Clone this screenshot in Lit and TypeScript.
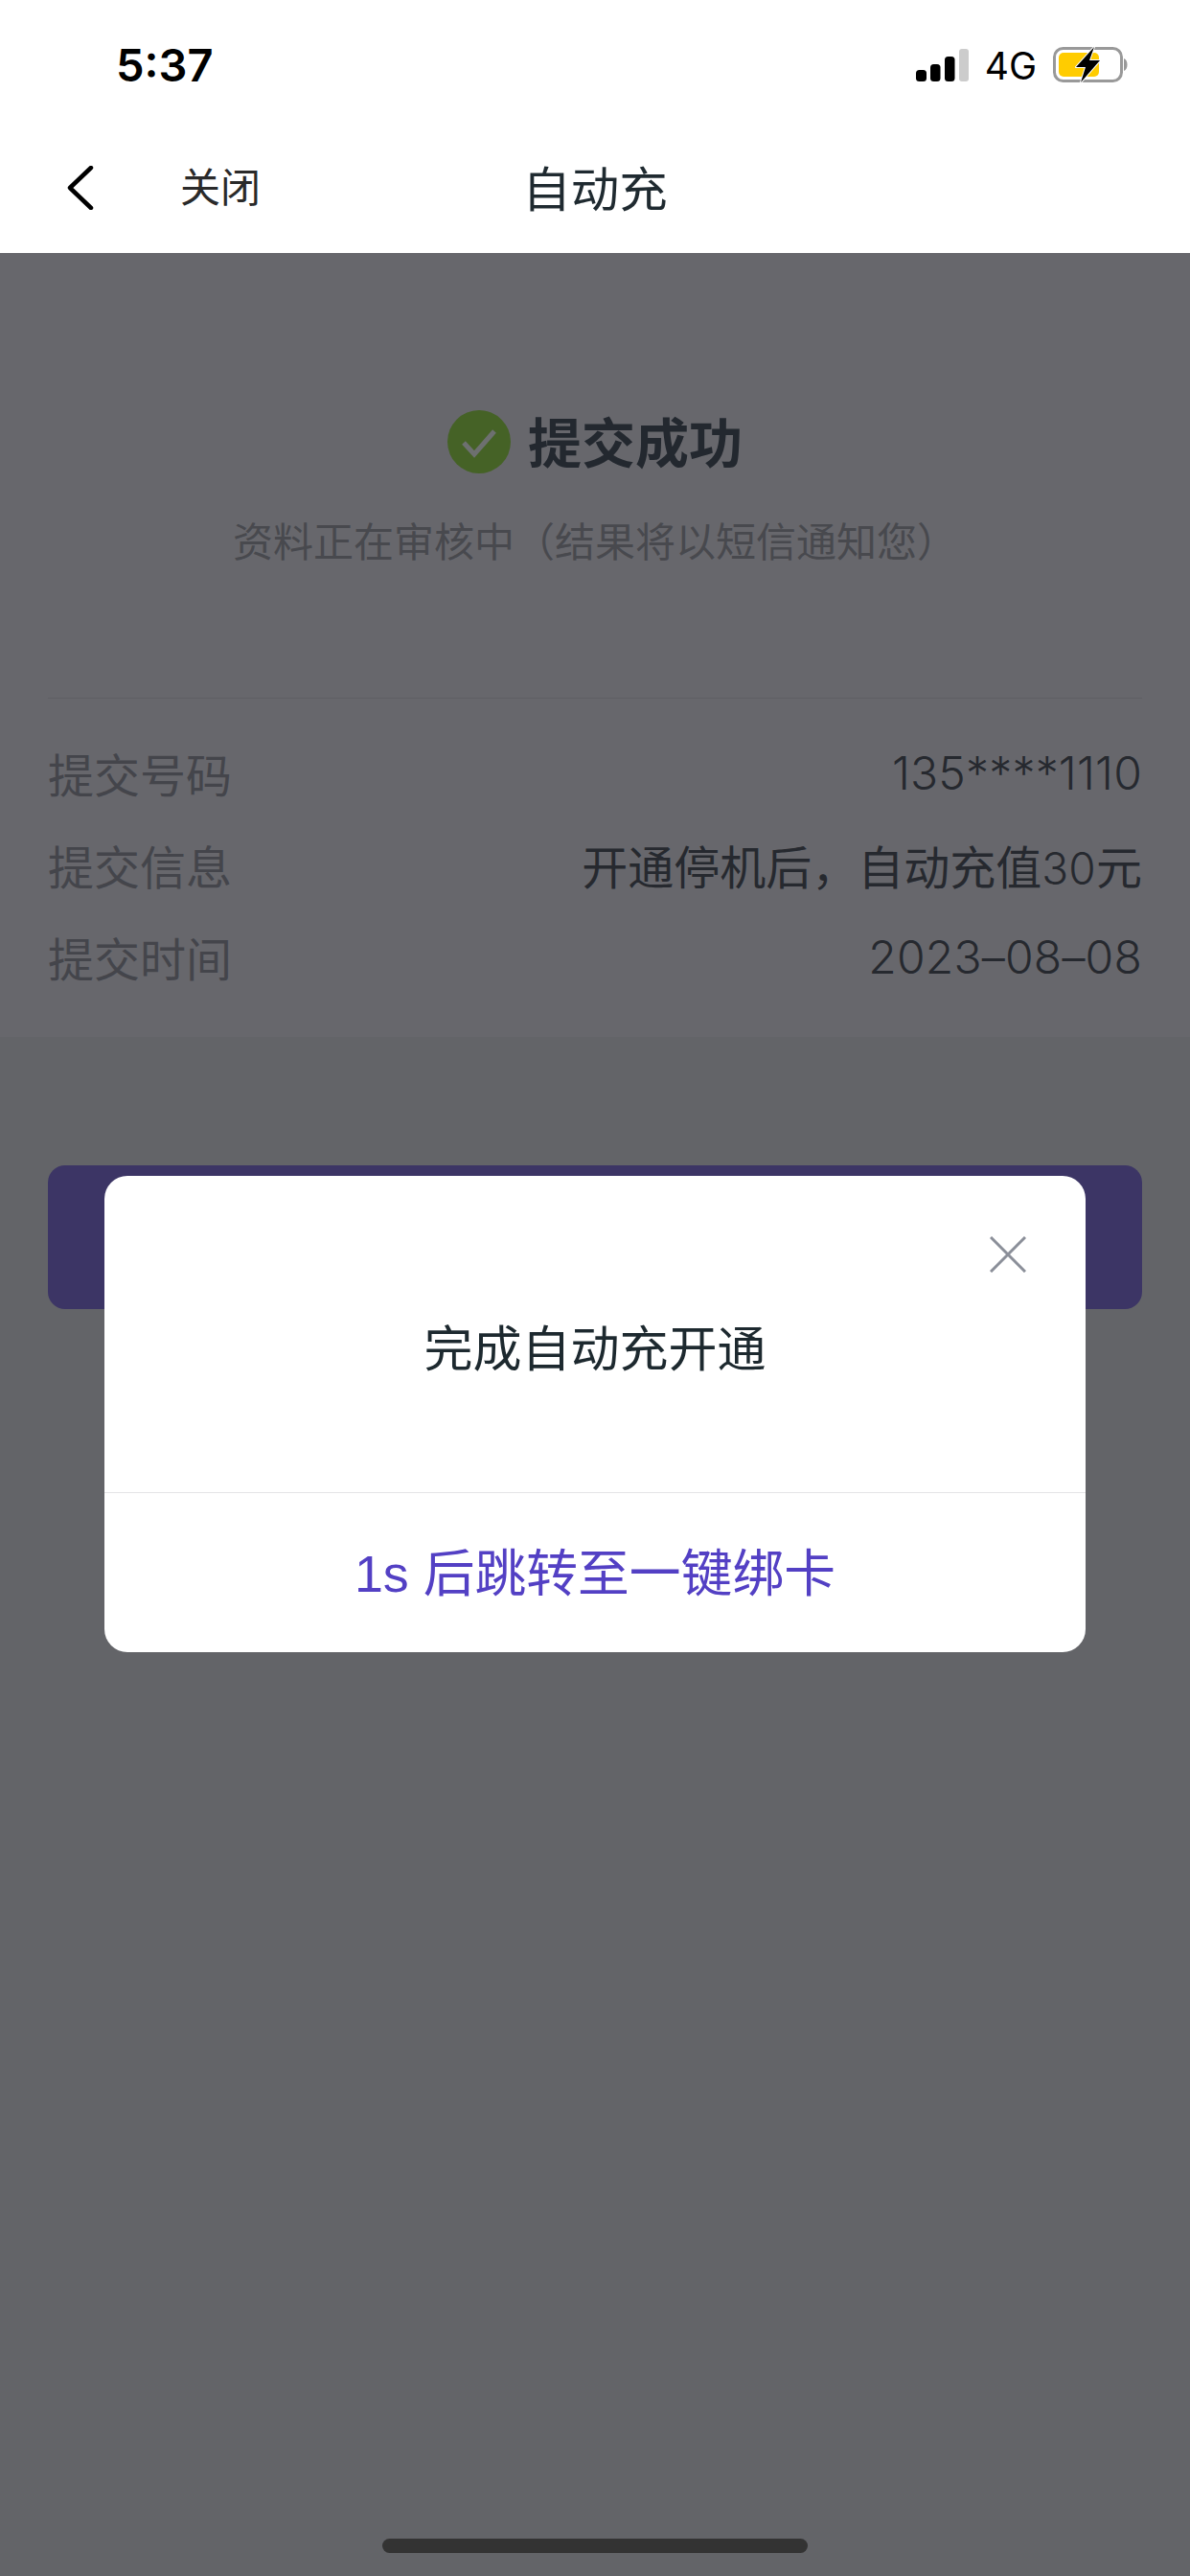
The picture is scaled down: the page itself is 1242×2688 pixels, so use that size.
import { LitElement, html, css } from "lit";
import { customElement } from "lit/decorators.js";

@customElement("app-root")
export class AppRoot extends LitElement {
  static styles = css`
    :host {
      display: block;
      position: relative;
      width: 1242px;
      height: 2688px;
      overflow: hidden;
      background: #636468;
      font-family: "Liberation Sans", "Noto Sans CJK SC", sans-serif;
    }
    .top { background: #fff; height: 264px; display: flex; flex-direction: column; }
    .status { height: 134px; display: flex; align-items: center; justify-content: space-between; padding: 0 65px 0 121px; box-sizing: border-box; }
    .time { font: 600 47px Inter, sans-serif; color: #000; margin-top: 1px; }
    .indicators { display: flex; align-items: center; margin-top: 2px; }
    .net { font: 400 39px Inter, sans-serif; color: #000; margin: 0 17px 0 17px; }
    .nav { height: 130px; display: grid; grid-template-columns: 1fr auto 1fr; align-items: center; }
    .left { display: flex; align-items: center; padding-left: 68px; }
    .back { margin-right: 88px; margin-bottom: 6px; }
    .close { font-size: 42px; color: #2a2a2a; margin-bottom: 14px; }
    .title { font-size: 50.500px; color: #1f2a30; margin-bottom: 10px; }
    .card { height: 818px; background: #67676c; box-sizing: border-box; padding: 164px 50px 0; }
    .hero { display: flex; justify-content: center; align-items: center; gap: 18px; height: 66px; }
    .hero-text { font-size: 56px; font-weight: 700; color: #23282f; margin-bottom: 6px; }
    .sub { text-align: center; font-size: 42px; color: #48494e; margin-top: 43px; line-height: 60px; }
    .rule { height: 1px; background: #5f5f64; margin-top: 131px; }
    .rows { margin-top: 41px; display: flex; flex-direction: column; gap: 24px; }
    .row { display: flex; justify-content: space-between; align-items: center; height: 72px; font-size: 48px; }
    .label { color: #44454b; }
    .value { color: #26292f; }
    .num { font-family: Inter, sans-serif; font-weight: 350; font-size: 48px; letter-spacing: 0.2px; }
    .tight { font-size: 46px; }
    .cta { height: 150px; margin: 134px 50px 0; border-radius: 18px; background: #3c3565; }
    .home { position: absolute; left: 399px; top: 2649px; width: 444px; height: 15px; border-radius: 8px; background: #333; }
    .modal { position: absolute; left: 109px; top: 1227px; width: 1024px; height: 497px; background: #fff; border-radius: 24px; display: flex; flex-direction: column; }
    .x { position: absolute; right: 62px; top: 63px; }
    .msg { height: 331px; padding-top: 146px; box-sizing: border-box; text-align: center; font-size: 51px; line-height: 72px; color: #1d292f; border-bottom: 1px solid #e4e4e6; }
    .link { flex: 1; display: flex; align-items: center; justify-content: center; font-size: 53.800px; color: #5340c4; padding-bottom: 8px; white-space: pre; }
  `;

  render() {
    return html`
      <div class="top">
        <div class="status">
          <span class="time">5:37</span>
          <div class="indicators">
            <svg width="55" height="34" viewBox="0 0 55 34">
              <rect x="0" y="22" width="11" height="12" rx="3.5" fill="#000" />
              <rect x="15" y="16" width="10.5" height="18" rx="3.5" fill="#000" />
              <rect x="30" y="8" width="10.5" height="26" rx="3.5" fill="#000" />
              <rect x="45" y="0" width="10" height="34" rx="3" fill="#ccc" />
            </svg>
            <span class="net">4G</span>
            <svg width="78" height="38" viewBox="0 0 78 38">
              <rect x="1.5" y="1.5" width="70" height="34" rx="9" fill="none" stroke="#999" stroke-width="3" />
              <path d="M74 12c2.500 1 3.500 3.500 3.500 6.500S76.500 24 74 25z" fill="#999" />
              <rect x="6" y="6" width="42" height="25" rx="5" fill="#fc0" />
              <path d="M43 0 24 21h10l-5 16 20-23H38z" fill="#000" stroke="#fff" stroke-width="2" paint-order="stroke" stroke-linejoin="round" />
            </svg>
          </div>
        </div>
        <div class="nav">
          <div class="left">
            <svg class="back" width="32" height="46" viewBox="0 0 32 46"><path d="M27 2 5 23l22 21" fill="none" stroke="#000" stroke-width="4.500" stroke-linecap="round" stroke-linejoin="round" /></svg>
            <span class="close">关闭</span>
          </div>
          <span class="title">自动充</span>
          <span></span>
        </div>
      </div>
      <div class="card">
        <div class="hero">
          <svg width="66" height="66" viewBox="0 0 66 66">
            <circle cx="33" cy="33" r="33" fill="#456226" />
            <path d="M17 34l11 12 21-24" fill="none" stroke="#6d7070" stroke-width="5" />
          </svg>
          <span class="hero-text">提交成功</span>
        </div>
        <div class="sub">资料正在审核中（结果将以短信通知您）</div>
        <div class="rule"></div>
        <div class="rows">
          <div class="row"><span class="label">提交号码</span><span class="value num">135****1110</span></div>
          <div class="row"><span class="label">提交信息</span><span class="value">开通停机后，自动充值<span class="num tight">30</span>元</span></div>
          <div class="row"><span class="label">提交时间</span><span class="value num">2023–08–08</span></div>
        </div>
      </div>
      <div class="cta"></div>
      <div class="home"></div>
      <div class="modal">
        <svg class="x" width="38" height="38" viewBox="0 0 38 38"><path d="M1 1l36 36M37 1 1 37" stroke="#8b8f99" stroke-width="3" fill="none" /></svg>
        <div class="msg">完成自动充开通</div>
        <div class="link">1s 后跳转至一键绑卡</div>
      </div>
    `;
  }
}
